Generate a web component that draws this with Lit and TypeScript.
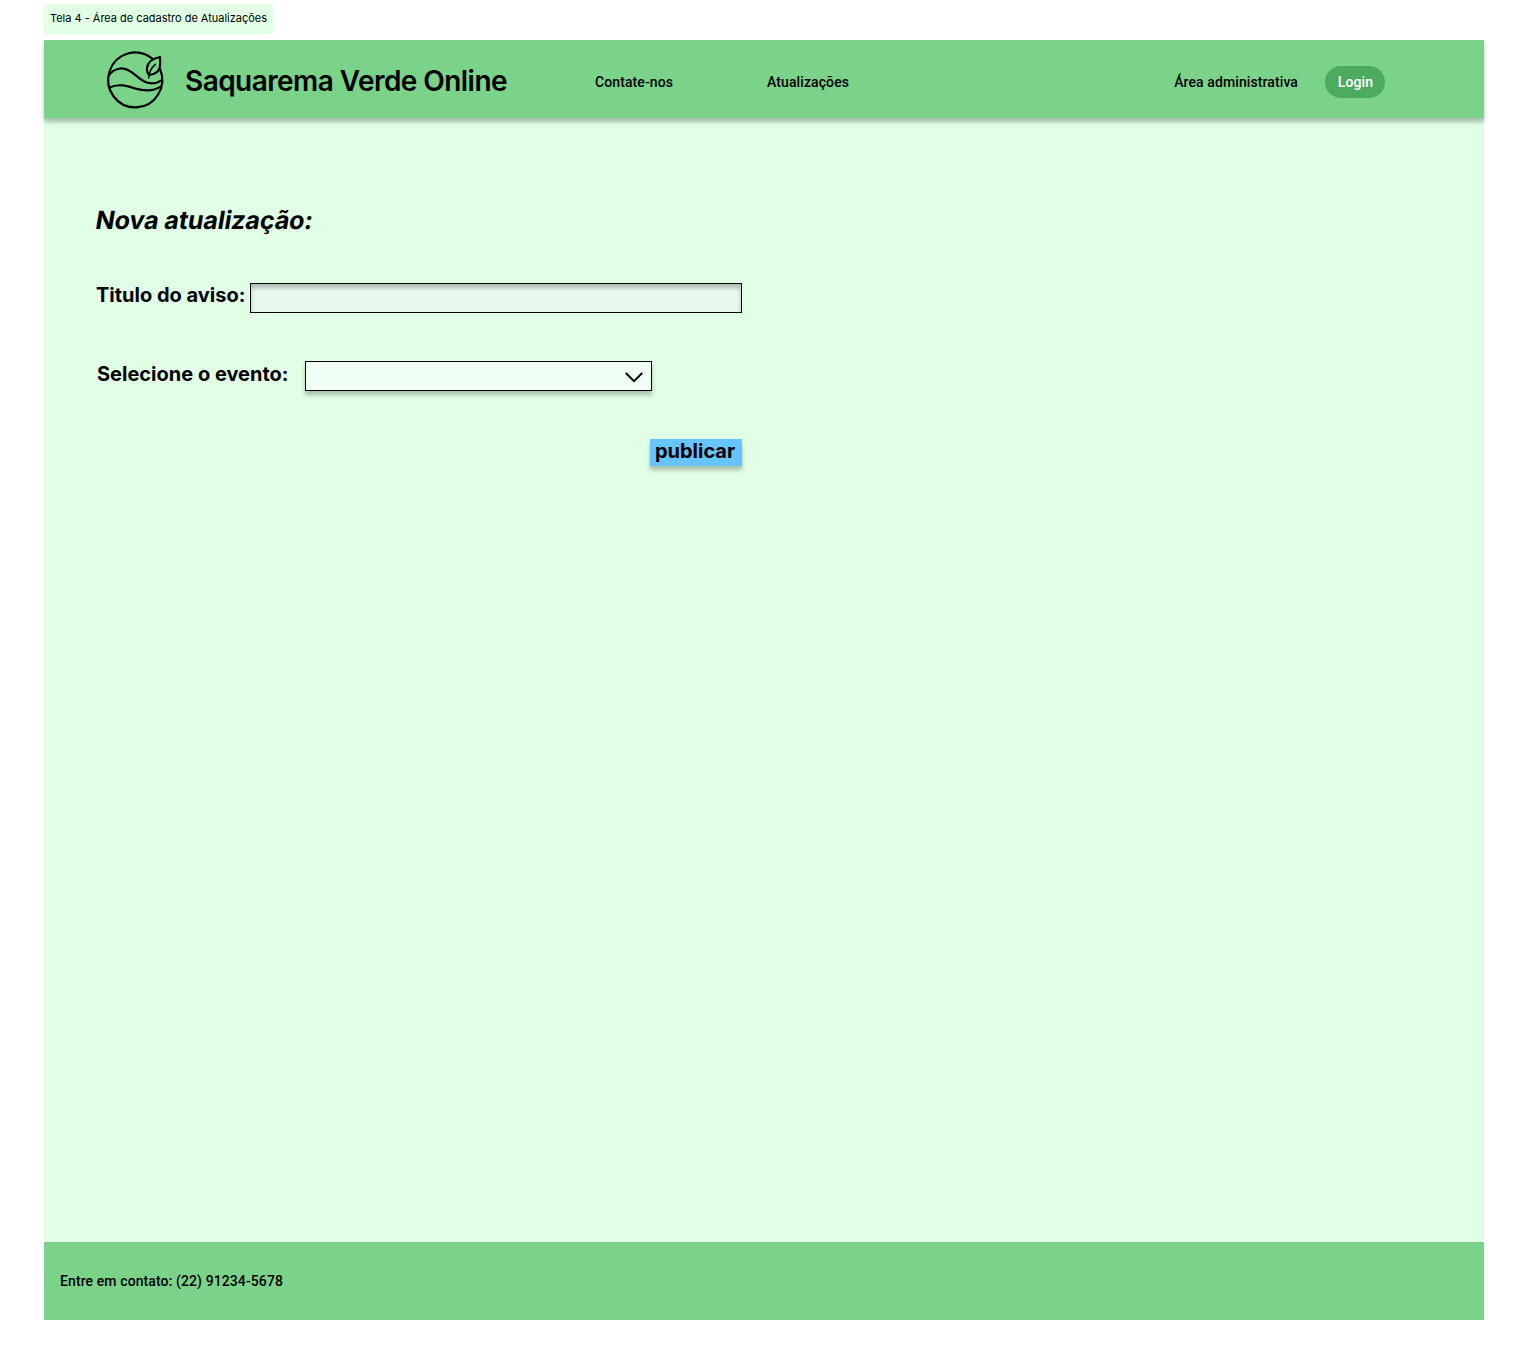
import { LitElement, html, css } from "lit";
import { customElement } from "lit/decorators.js";

@customElement("brand-logo")
export class BrandLogo extends LitElement {
  static styles = css`
    :host { display: block; width: 80px; height: 78px; }
    .mark { display: block; fill: none; stroke: #000; stroke-width: 6.6; stroke-linejoin: round; stroke-linecap: round; }
    .vein { stroke-width: 4.5; }
  `;

  render() {
    return html`
      <svg class="mark" width="80" height="78" viewBox="0 0 240 234" aria-hidden="true">
        <path d="M172 56 A81 82.5 0 1 0 195 87" />
        <path d="M41 106 C58 84 84 79 106 94 C122 104 134 119 151 126 C167 132 186 130 200 121" />
        <path d="M42 143 C72 129 98 138 122 146 C150 154 178 152 198 139" />
        <path d="M195 51 C175 55 158 64 156 84 C155 93 158 101 163 105 C182 102 194 92 195 78 C196 68 195 59 195 51 Z" />
        <path class="vein" d="M161 114 C162 97 168 84 181 73" />
      </svg>
    `;
  }
}

@customElement("app-root")
export class AppRoot extends LitElement {
  static styles = css`
    :host {
      display: block;
      box-sizing: border-box;
      height: 1360px;
      padding: 4px 44px 40px;
      background: #fff;
      color: #000;
      font-family: Inter, "Liberation Sans", sans-serif;
    }
    * { box-sizing: border-box; }
    .tag {
      width: 229px;
      height: 30px;
      padding-left: 6px;
      border-radius: 3px;
      background: #e0ffe5;
      font-size: 11px;
      line-height: 29px;
      letter-spacing: -0.015px;
      white-space: nowrap;
    }
    .screen {
      display: flex;
      flex-direction: column;
      height: 1280px;
      margin-top: 6px;
      background: #e0ffe5;
    }
    .header {
      display: flex;
      align-items: center;
      flex: none;
      height: 78px;
      padding: 0 98.6px 0 51px;
      background: #7bd389;
      box-shadow: 0 4px 4px rgba(0, 0, 0, 0.25);
      white-space: nowrap;
    }
    .brand {
      width: 410px;
      margin: 4px 0 0 10px;
      font-size: 28px;
      font-weight: 600;
      line-height: 34px;
      letter-spacing: -0.56px;
    }
    .link, .login, .footer {
      font-family: Roboto, "Liberation Sans", sans-serif;
      font-size: 14px;
      font-weight: 500;
      line-height: 20px;
      letter-spacing: 0.1px;
    }
    .link { margin-top: 6px; }
    .contact { width: 172px; }
    .admin { margin-left: auto; }
    .login {
      width: 60px;
      height: 32px;
      margin: 6px 0 0 27.4px;
      padding: 0;
      border: 0;
      border-radius: 16px;
      background: #4cab5e;
      color: #fff;
    }
    .content { flex: 1; padding: 86px 0 0 52px; }
    .heading {
      width: max-content;
      margin: 0 0 0 -1px;
      font-size: 25px;
      font-weight: 700;
      line-height: 32px;
      letter-spacing: -0.08px;
      transform: skewX(-9.4deg);
      transform-origin: 0 70%;
    }
    .row {
      display: flex;
      align-items: flex-start;
      height: 30px;
      font-size: 20px;
      font-weight: 700;
      line-height: 24px;
      white-space: nowrap;
    }
    .title-row { margin-top: 47px; }
    .event-row { margin-top: 48px; padding-left: 1px; }
    .title-label { width: 154px; }
    .event-label { width: 208px; padding-top: 1px; }
    .input {
      width: 492px;
      height: 30px;
      padding: 0 8px;
      border: 1px solid #000;
      border-radius: 0;
      outline: 0;
      background: #e9f8ed;
      box-shadow: inset 0 4px 4px rgba(0, 0, 0, 0.25);
    }
    .select {
      display: flex;
      align-items: center;
      justify-content: flex-end;
      width: 347px;
      height: 30px;
      padding: 2px 8px 0 0;
      border: 1px solid #000;
      background: #f0fff3;
      box-shadow: 0 4px 4px rgba(0, 0, 0, 0.25);
    }
    .chevron { display: block; fill: none; stroke: #000; stroke-width: 2; }
    .publish {
      display: block;
      width: 92px;
      height: 27px;
      margin: 48px 0 0 554px;
      padding: 0 2px 2px 0;
      border: 0;
      background: #68c4ff;
      box-shadow: 0 4px 4px rgba(0, 0, 0, 0.25);
      color: #000;
      font-family: inherit;
      font-size: 20px;
      font-weight: 700;
      line-height: 23px;
    }
    .footer {
      flex: none;
      height: 78px;
      padding: 29px 16px;
      background: #7bd389;
    }
  `;

  render() {
    return html`
      <div class="tag">Tela 4 - Área de cadastro de Atualizações</div>
      <div class="screen">
        <header class="header">
          <brand-logo></brand-logo>
          <div class="brand">Saquarema Verde Online</div>
          <div class="link contact">Contate-nos</div>
          <div class="link">Atualizações</div>
          <div class="link admin">Área administrativa</div>
          <button class="login">Login</button>
        </header>
        <main class="content">
          <h1 class="heading">Nova atualização:</h1>
          <div class="row title-row">
            <label class="title-label" for="title">Titulo do aviso:</label>
            <input class="input" id="title" />
          </div>
          <div class="row event-row">
            <div class="event-label">Selecione o evento:</div>
            <div class="select" role="combobox">
              <svg class="chevron" width="18" height="11" viewBox="0 0 18 11">
                <path d="M0.8 1 L9 9.2 L17.2 1" />
              </svg>
            </div>
          </div>
          <button class="publish">publicar</button>
        </main>
        <footer class="footer">Entre em contato: (22) 91234-5678</footer>
      </div>
    `;
  }
}
